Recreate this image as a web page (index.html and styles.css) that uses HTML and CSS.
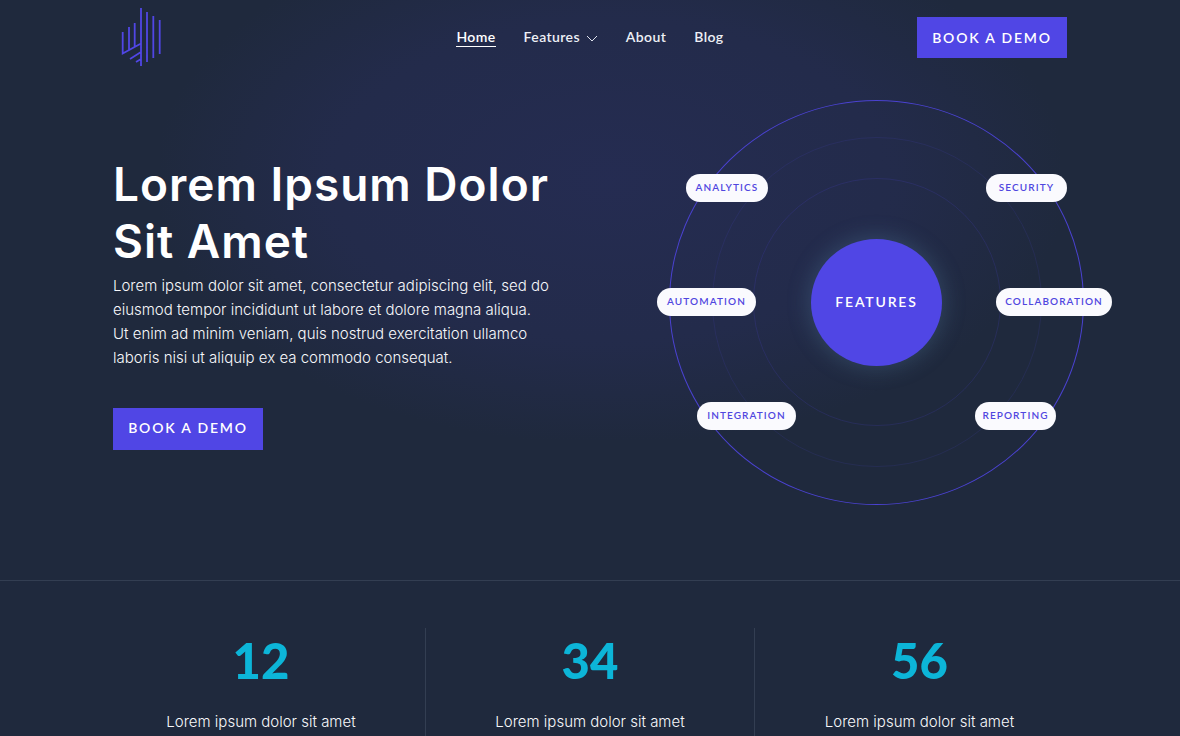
FILE: index.html
```html
<!DOCTYPE html>
<html lang="en">
<head>
  <meta charset="UTF-8" />
  <meta name="viewport" content="width=device-width, initial-scale=1.0"/>
  <title>Lorem Ipsum</title>
  <link rel="stylesheet" href="styles.css">
</head>
<body>
  <div class="glow"></div>
  <header class="header">
    <a href="#" class="logo">
      <svg width="42" height="60" viewBox="0 0 42 60" fill="none" stroke="#5046e5" stroke-width="1.8">
        <path d="M2.7 26V47.500L21 37.500M9 21V44M14.700 17V41M21 2V60M27 6V56M33.300 10V52M39.700 14V48M10 53L21 46M16 56L21 53"/>
      </svg>
    </a>
    <nav class="nav">
      <a href="#" class="active">Home</a>
      <a href="#" class="has-caret">Features
        <svg width="12" height="7" viewBox="0 0 12 7" fill="none" stroke="#dfe3ee" stroke-width="1"><path d="M1 1L6 6L11 1"/></svg>
      </a>
      <a href="#">About</a>
      <a href="#">Blog</a>
    </nav>
    <div class="header-cta"><a href="#" class="btn">BOOK A DEMO</a></div>
  </header>

  <section class="hero">
    <div class="hero-text">
      <h1>Lorem Ipsum Dolor Sit Amet</h1>
      <p>Lorem ipsum dolor sit amet, consectetur adipiscing elit, sed do eiusmod tempor incididunt ut labore et dolore magna aliqua.<br>Ut enim ad minim veniam, quis nostrud exercitation ullamco laboris nisi ut aliquip ex ea commodo consequat.</p>
      <a href="#" class="btn btn-hero">BOOK A DEMO</a>
    </div>
    <div class="diagram">
      <div class="ring ring-outer"></div>
      <div class="ring ring-mid"></div>
      <div class="ring ring-inner"></div>
      <div class="core">FEATURES</div>
      <span class="pill pill-analytics">ANALYTICS</span>
      <span class="pill pill-security">SECURITY</span>
      <span class="pill pill-automation">AUTOMATION</span>
      <span class="pill pill-collaboration">COLLABORATION</span>
      <span class="pill pill-integration">INTEGRATION</span>
      <span class="pill pill-reporting">REPORTING</span>
    </div>
  </section>

  <section class="stats">
    <div class="stat">
      <div class="stat-num">12</div>
      <div class="stat-label">Lorem ipsum dolor sit amet</div>
    </div>
    <div class="stat">
      <div class="stat-num">34</div>
      <div class="stat-label">Lorem ipsum dolor sit amet</div>
    </div>
    <div class="stat">
      <div class="stat-num">56</div>
      <div class="stat-label">Lorem ipsum dolor sit amet</div>
    </div>
  </section>
</body>
</html>
```

FILE: styles.css
```css
* {
  box-sizing: border-box;
  margin: 0;
  padding: 0;
}

html, body {
  height: 736px;
  overflow: hidden;
}

body {
  position: relative;
  font-family: 'Lato', 'Liberation Sans', sans-serif;
  background: #1f293d;
  color: #fff;
}

a {
  color: inherit;
  text-decoration: none;
}

.glow {
  position: absolute;
  left: 160px;
  top: -80px;
  width: 900px;
  height: 520px;
  background: radial-gradient(ellipse at center, rgba(45,48,110,0.42) 0%, rgba(45,48,110,0.28) 45%, rgba(45,48,110,0) 72%);
}

.header {
  position: relative;
  display: grid;
  grid-template-columns: 1fr auto 1fr;
  align-items: center;
  height: 75px;
  padding: 0 113px;
}

.logo {
  display: block;
  align-self: start;
  height: 66px;
  padding: 6px 0 0 7px;
}

.nav {
  display: flex;
  gap: 28px;
  font-size: 14px;
  font-weight: 600;
  color: #eef0f6;
}

.nav a {
  padding-bottom: 1px;
  border-bottom: 1px solid transparent;
  letter-spacing: 0.4px;
}

.nav a.active {
  border-bottom-color: #fff;
  color: #fff;
}

.has-caret svg {
  margin-left: 2px;
}

.header-cta {
  display: flex;
  justify-content: flex-end;
}

.btn {
  display: inline-block;
  width: 150px;
  height: 41px;
  line-height: 41px;
  text-align: center;
  background: #5046e5;
  color: #fff;
  font-size: 14px;
  font-weight: 600;
  letter-spacing: 1.8px;
}

.btn-hero {
  height: 42px;
  line-height: 40px;
}

.hero {
  position: relative;
  display: flex;
  justify-content: space-between;
  height: 505px;
  padding-left: 113px;
}

.hero-text {
  width: 440px;
  padding-top: 81px;
}

.hero-text h1 {
  font-family: 'Inter', 'Liberation Sans', sans-serif;
  font-size: 46px;
  line-height: 57px;
  font-weight: 600;
  letter-spacing: 1px;
}

.hero-text p {
  margin-top: 4px;
  margin-bottom: 38px;
  font-family: 'Inter', 'Liberation Sans', sans-serif;
  font-size: 15px;
  line-height: 24px;
  font-weight: 300;
  color: #f7f8fb;
}

.diagram {
  position: relative;
  width: 510px;
  height: 505px;
}

.ring {
  position: absolute;
  border-radius: 50%;
}

.ring-outer {
  left: -1px;
  top: 25px;
  width: 415px;
  height: 405px;
  border: 1px solid #4a42d0;
}

.ring-mid {
  left: 42px;
  top: 62px;
  width: 330px;
  height: 330px;
  border: 1px solid rgba(80,70,229,0.12);
}

.ring-inner {
  left: 83px;
  top: 103px;
  width: 248px;
  height: 248px;
  border: 1px solid rgba(80,70,229,0.16);
}

.core {
  position: absolute;
  left: 141px;
  top: 164px;
  width: 131px;
  height: 127px;
  padding-bottom: 2px;
  border-radius: 50%;
  background: #5046e5;
  box-shadow: 0 0 20px 4px rgba(90,140,170,0.25);
  display: flex;
  align-items: center;
  justify-content: center;
  font-size: 14px;
  font-weight: 600;
  letter-spacing: 1.8px;
}

.pill {
  position: absolute;
  height: 28px;
  line-height: 27px;
  text-align: center;
  border-radius: 14px;
  background: #fafafe;
  color: #5046e0;
  font-size: 10px;
  font-weight: 600;
  letter-spacing: 1.1px;
}

.pill-analytics { left: 16px; top: 99px; width: 82px; }
.pill-security { left: 316px; top: 99px; width: 81px; }
.pill-automation { left: -13px; top: 213px; width: 99px; }
.pill-collaboration { left: 326px; top: 213px; width: 116px; }
.pill-integration { left: 27px; top: 327px; width: 99px; }
.pill-reporting { left: 305px; top: 327px; width: 81px; }

.stats {
  position: relative;
  display: grid;
  grid-template-columns: repeat(3, 329px);
  padding: 47px 0 0 97px;
  border-top: 1px solid #333e52;
}

.stat {
  height: 109px;
  text-align: center;
  border-right: 1px solid #333e52;
}

.stat:last-child {
  border-right: none;
}

.stat-num {
  font-size: 49px;
  line-height: 64px;
  font-weight: 900;
  color: #0cb5d8;
}

.stat-label {
  margin-top: 18px;
  font-family: 'Inter', 'Liberation Sans', sans-serif;
  font-size: 15px;
  line-height: 24px;
  font-weight: 300;
  color: #f7f8fb;
}
```
